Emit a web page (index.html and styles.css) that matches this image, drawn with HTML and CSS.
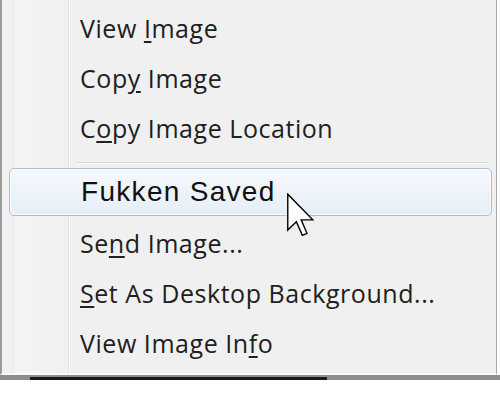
FILE: index.html
```html
<!DOCTYPE html>
<html>
<head>
<meta charset="utf-8">
<link rel="stylesheet" href="styles.css">
</head>
<body>
<div class="screen">
  <div class="menu">
    <div class="gutter"></div>
    <ul class="items">
      <li class="item"><span>View <u>I</u>mage</span></li>
      <li class="item"><span>Cop<u>y</u> Image</span></li>
      <li class="item"><span>C<u>o</u>py Image Location</span></li>
      <li class="sep"></li>
      <li class="item hot"><span class="hot-text">Fukken Saved</span>
        <svg class="cursor" viewBox="0 0 12 19" width="29" height="44">
          <path d="M0.5 0.5 L0.5 16 L4.2 12.4 L6.8 18.3 L8.8 17.4 L6.3 11.6 L11.3 11.6 Z" fill="#fff" stroke="#000" stroke-width="0.6" stroke-linejoin="miter"/>
        </svg>
      </li>
      <li class="item"><span>Se<u>n</u>d Image...</span></li>
      <li class="item"><span><u>S</u>et As Desktop Background...</span></li>
      <li class="item"><span>View Image In<u>f</u>o</span></li>
    </ul>
  </div>
  <div class="under">
    <div class="under-dark"></div>
  </div>
</div>
</body>
</html>
```
FILE: styles.css
```css
html, body {
  margin: 0;
  padding: 0;
  background: #ffffff;
}
.screen {
  width: 500px;
  height: 402px;
  position: relative;
  overflow: hidden;
}
.menu {
  width: 497px;
  height: 375px;
  background: #f0f0f0;
  border-left: 2px solid #9a9a9a;
  border-right: 1px solid #a8a8a8;
  border-bottom: 2px solid #fafafa;
  box-sizing: border-box;
  display: flex;
  position: relative;
}
.gutter {
  width: 66px;
  flex: none;
  border-right: 1px solid #e2e3e3;
  box-shadow: 1px 0 0 #ffffff;
  background: linear-gradient(to right, #f1f1f1 0, #f1f1f1 10px, #e8e8e8 11px, #f4f4f4 12px, #f0f0f0 100%);
}
.items {
  list-style: none;
  margin: 0;
  padding: 3px 4px 0 0;
  flex: 1;
  display: flex;
  flex-direction: column;
  margin-left: -62px;
}
.item {
  height: 50px;
  flex: none;
  display: flex;
  align-items: center;
  padding-left: 73px;
  font-family: "Open Sans", "Noto Sans", sans-serif;
  font-size: 25px;
  color: #202020;
  letter-spacing: 0.55px;
}
.item u {
  text-decoration-thickness: 2px;
  text-underline-offset: 3px;
}
.sep {
  height: 1px;
  flex: none;
  margin: 9px 4px 4px 70px;
  background: #d7d7d7;
  border-bottom: 1px solid #fbfbfb;
}
.hot {
  height: 46px;
  margin-bottom: 2px;
  border: 1px solid #a9bfd6;
  border-radius: 5px;
  background: linear-gradient(to bottom, #f6f9fc 0%, #eef3f9 50%, #e6eef6 100%);
  box-shadow: inset 0 0 0 1px #fafcfe;
  padding-left: 71px;
  margin-left: 2px;
  position: relative;
}
.hot-text {
  font-family: "Liberation Sans", Arial, sans-serif;
  font-size: 28px;
  letter-spacing: 1.3px;
  color: #111111;
}
.cursor {
  position: absolute;
  left: 276px;
  top: 24px;
}
.under {
  height: 5px;
  width: 500px;
  background: #8e8e8e;
  display: flex;
  padding-left: 30px;
  box-sizing: border-box;
  align-items: flex-end;
}
.under-dark {
  width: 297px;
  height: 3px;
  background: #1a1a1a;
}
```
